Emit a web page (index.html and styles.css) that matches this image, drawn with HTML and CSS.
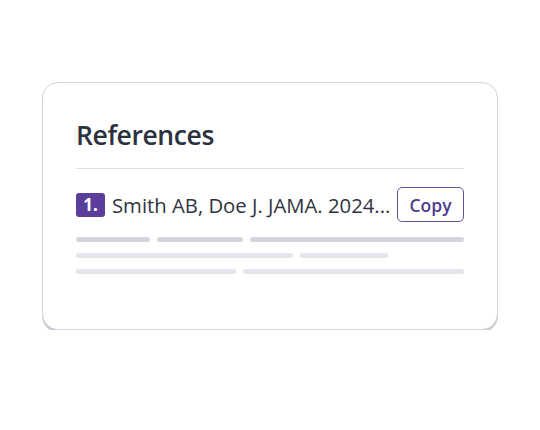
FILE: index.html
```html
<!DOCTYPE html>
<html lang="en">
<head>
<meta charset="utf-8">
<title>References</title>
<link rel="stylesheet" href="styles.css">
</head>
<body>
  <div class="card">
    <h2 class="title">References</h2>
    <div class="divider"></div>
    <div class="ref-row">
      <span class="badge">1.</span>
      <span class="ref-text">Smith AB, Doe J. JAMA. 2024...</span>
      <button class="copy-btn">Copy</button>
    </div>
    <div class="skeleton">
      <div class="sk-row dark">
        <span class="bar" style="width:74px"></span>
        <span class="bar" style="width:86px"></span>
        <span class="bar grow"></span>
      </div>
      <div class="sk-row">
        <span class="bar" style="width:217px"></span>
        <span class="bar" style="width:88px"></span>
      </div>
      <div class="sk-row">
        <span class="bar" style="width:160px"></span>
        <span class="bar grow"></span>
      </div>
    </div>
  </div>
</body>
</html>
```

FILE: styles.css
```css
html, body {
  margin: 0;
  padding: 0;
  background: #ffffff;
}
body {
  font-family: "Open Sans", "Noto Sans", sans-serif;
  padding: 82px 0 0 42px;
}
.card {
  box-sizing: border-box;
  width: 456px;
  height: 248px;
  border: 1.5px solid #d3d3dc;
  border-radius: 16px;
  box-shadow: 0 2px 0 #c8c8d3;
  background: #ffffff;
  padding: 35px 33px 0 33px;
}
.title {
  margin: 0;
  font-size: 26.5px;
  line-height: 34px;
  font-weight: 600;
  color: #2b313e;
  letter-spacing: -0.4px;
}
.divider {
  height: 1px;
  background: #dfdfe6;
  margin-top: 16px;
}
.ref-row {
  display: flex;
  align-items: center;
  gap: 7px;
  margin-top: 18px;
  height: 35px;
}
.badge {
  display: flex;
  align-items: center;
  justify-content: center;
  width: 29px;
  height: 24px;
  border-radius: 3px;
  background: #5b3e9c;
  color: #ffffff;
  font-weight: 700;
  font-size: 17px;
  line-height: 1;
}
.ref-text {
  flex: 1;
  min-width: 0;
  white-space: nowrap;
  overflow: hidden;
  font-size: 20.3px;
  font-weight: 500;
  color: #2f3441;
}
.copy-btn {
  box-sizing: border-box;
  width: 67px;
  height: 35px;
  border: 1.5px solid #6453a3;
  border-radius: 5px;
  background: #ffffff;
  color: #4f3d8c;
  font-family: "Open Sans", "Noto Sans", sans-serif;
  font-size: 17.5px;
  font-weight: 600;
  padding: 0;
}
.skeleton {
  margin-top: 15px;
  display: flex;
  flex-direction: column;
  gap: 11px;
}
.sk-row {
  display: flex;
  gap: 7px;
}
.bar {
  display: block;
  height: 5px;
  border-radius: 3px;
  background: #e4e4eb;
}
.sk-row.dark .bar {
  background: #d4d4de;
}
.bar.grow {
  flex: 1;
}
```
